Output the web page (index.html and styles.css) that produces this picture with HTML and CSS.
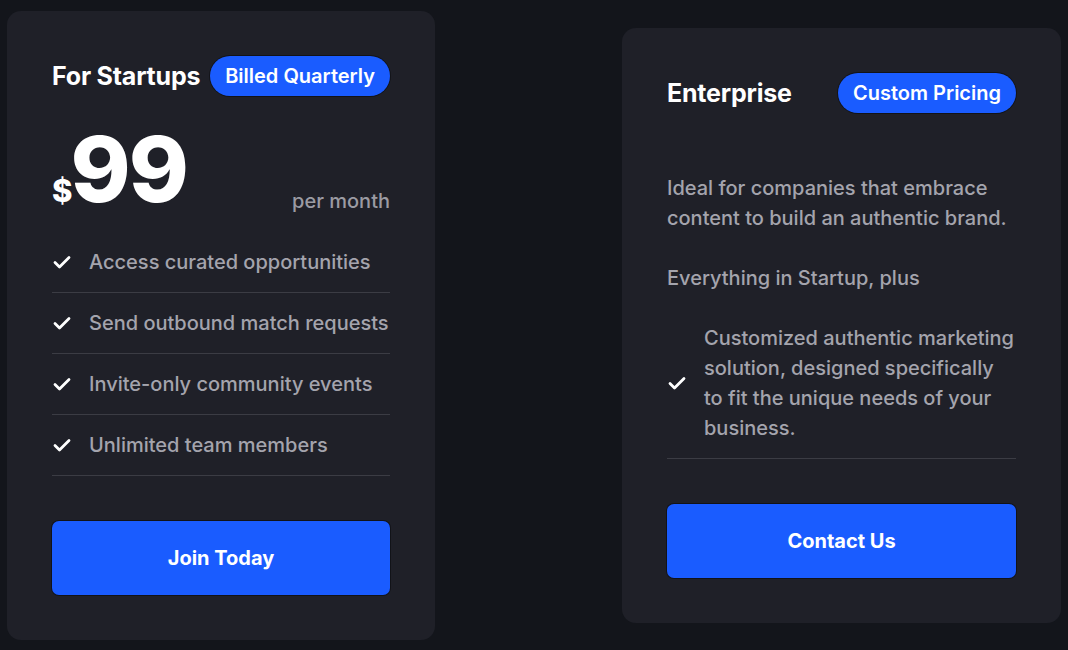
FILE: index.html
```html
<!DOCTYPE html>
<html>
<head>
  <title>Pricing</title>
  <link rel="stylesheet" href="styles.css">
</head>
<body>
  <div class="plans">
    <div class="card card-startup">
      <div class="card-head">
        <h2>For Startups</h2>
        <span class="badge">Billed Quarterly</span>
      </div>
      <div class="price-row">
        <div class="price"><span class="currency">$</span><span class="amount">99</span></div>
        <span class="period">per month</span>
      </div>
      <ul class="features">
        <li><svg class="check" viewBox="0 0 20 20"><path d="M3 10.5l4.5 4.5L17 5.5"/></svg>Access curated opportunities</li>
        <li><svg class="check" viewBox="0 0 20 20"><path d="M3 10.5l4.5 4.5L17 5.5"/></svg>Send outbound match requests</li>
        <li><svg class="check" viewBox="0 0 20 20"><path d="M3 10.5l4.5 4.5L17 5.5"/></svg>Invite-only community events</li>
        <li><svg class="check" viewBox="0 0 20 20"><path d="M3 10.5l4.5 4.5L17 5.5"/></svg>Unlimited team members</li>
      </ul>
      <button class="cta">Join Today</button>
    </div>

    <div class="card card-enterprise">
      <div class="card-head">
        <h2>Enterprise</h2>
        <span class="badge">Custom Pricing</span>
      </div>
      <p class="desc">Ideal for companies that embrace content to build an authentic brand.</p>
      <p class="desc plus">Everything in Startup, plus</p>
      <ul class="features">
        <li><svg class="check" viewBox="0 0 20 20"><path d="M3 10.5l4.5 4.5L17 5.5"/></svg><span>Customized authentic marketing solution, designed specifically to fit the unique needs of your business.</span></li>
      </ul>
      <button class="cta">Contact Us</button>
    </div>
  </div>
</body>
</html>
```

FILE: styles.css
```css
/* Pricing cards */
body {
  margin: 0;
  background-color: #13151b;
  font-family: Inter, "Noto Sans", sans-serif;
  color: #a4a4ad;
}

.plans {
  height: 650px;
  display: flex;
  align-items: center;
  padding-left: 7px;
  gap: 187px;
}

.card {
  background-color: #1f2028;
  border-radius: 14px;
  padding: 45px;
  box-sizing: border-box;
  display: flex;
  flex-direction: column;
}

.card-startup {
  width: 428px;
}

.card-enterprise {
  width: 439px;
}

.card-head {
  display: flex;
  align-items: center;
  justify-content: space-between;
  height: 40px;
}

.card-head h2 {
  margin: 0;
  color: #fff;
  font-size: 25px;
  font-weight: 700;
  letter-spacing: -0.2px;
}

.badge {
  background-color: #1a5cff;
  color: #fff;
  font-size: 20px;
  font-weight: 600;
  height: 40px;
  line-height: 40px;
  padding: 0 15px;
  border-radius: 20px;
  box-sizing: border-box;
  box-shadow: 0 0 0 1px rgba(0, 0, 0, 0.4);
}

.price-row {
  display: flex;
  justify-content: space-between;
  align-items: baseline;
  height: 96px;
  margin-top: 24px;
  margin-bottom: 16px;
}

.price {
  color: #fff;
  font-weight: 800;
  line-height: 1;
  padding-top: 4px;
}

.currency {
  font-size: 31px;
}

.amount {
  font-size: 91px;
  letter-spacing: -2px;
  margin-left: -2px;
}

.period {
  font-size: 20px;
  font-weight: 500;
  color: #9b9ba3;
  position: relative;
  top: 6px;
}

.features {
  list-style: none;
  margin: 0;
  padding: 0;
}

.features li {
  display: flex;
  align-items: center;
  gap: 17px;
  padding: 15px 0;
  font-size: 20px;
  font-weight: 500;
  line-height: 30px;
  border-bottom: 1px solid #3b3c44;
}

.check {
  width: 20px;
  height: 20px;
  flex-shrink: 0;
  fill: none;
  stroke: #fff;
  stroke-width: 2.8;
  stroke-linecap: round;
  stroke-linejoin: round;
}

.desc {
  margin: 60px 0 0;
  font-size: 20px;
  font-weight: 500;
  line-height: 30px;
}

.desc.plus {
  margin: 30px 0 15px;
}

.cta {
  margin-top: 45px;
  height: 74px;
  border: none;
  border-radius: 7px;
  background-color: #1a5cff;
  color: #fff;
  font-family: inherit;
  font-size: 20px;
  font-weight: 700;
  box-shadow: 0 0 0 1px rgba(0, 0, 0, 0.4);
  cursor: pointer;
}
```
